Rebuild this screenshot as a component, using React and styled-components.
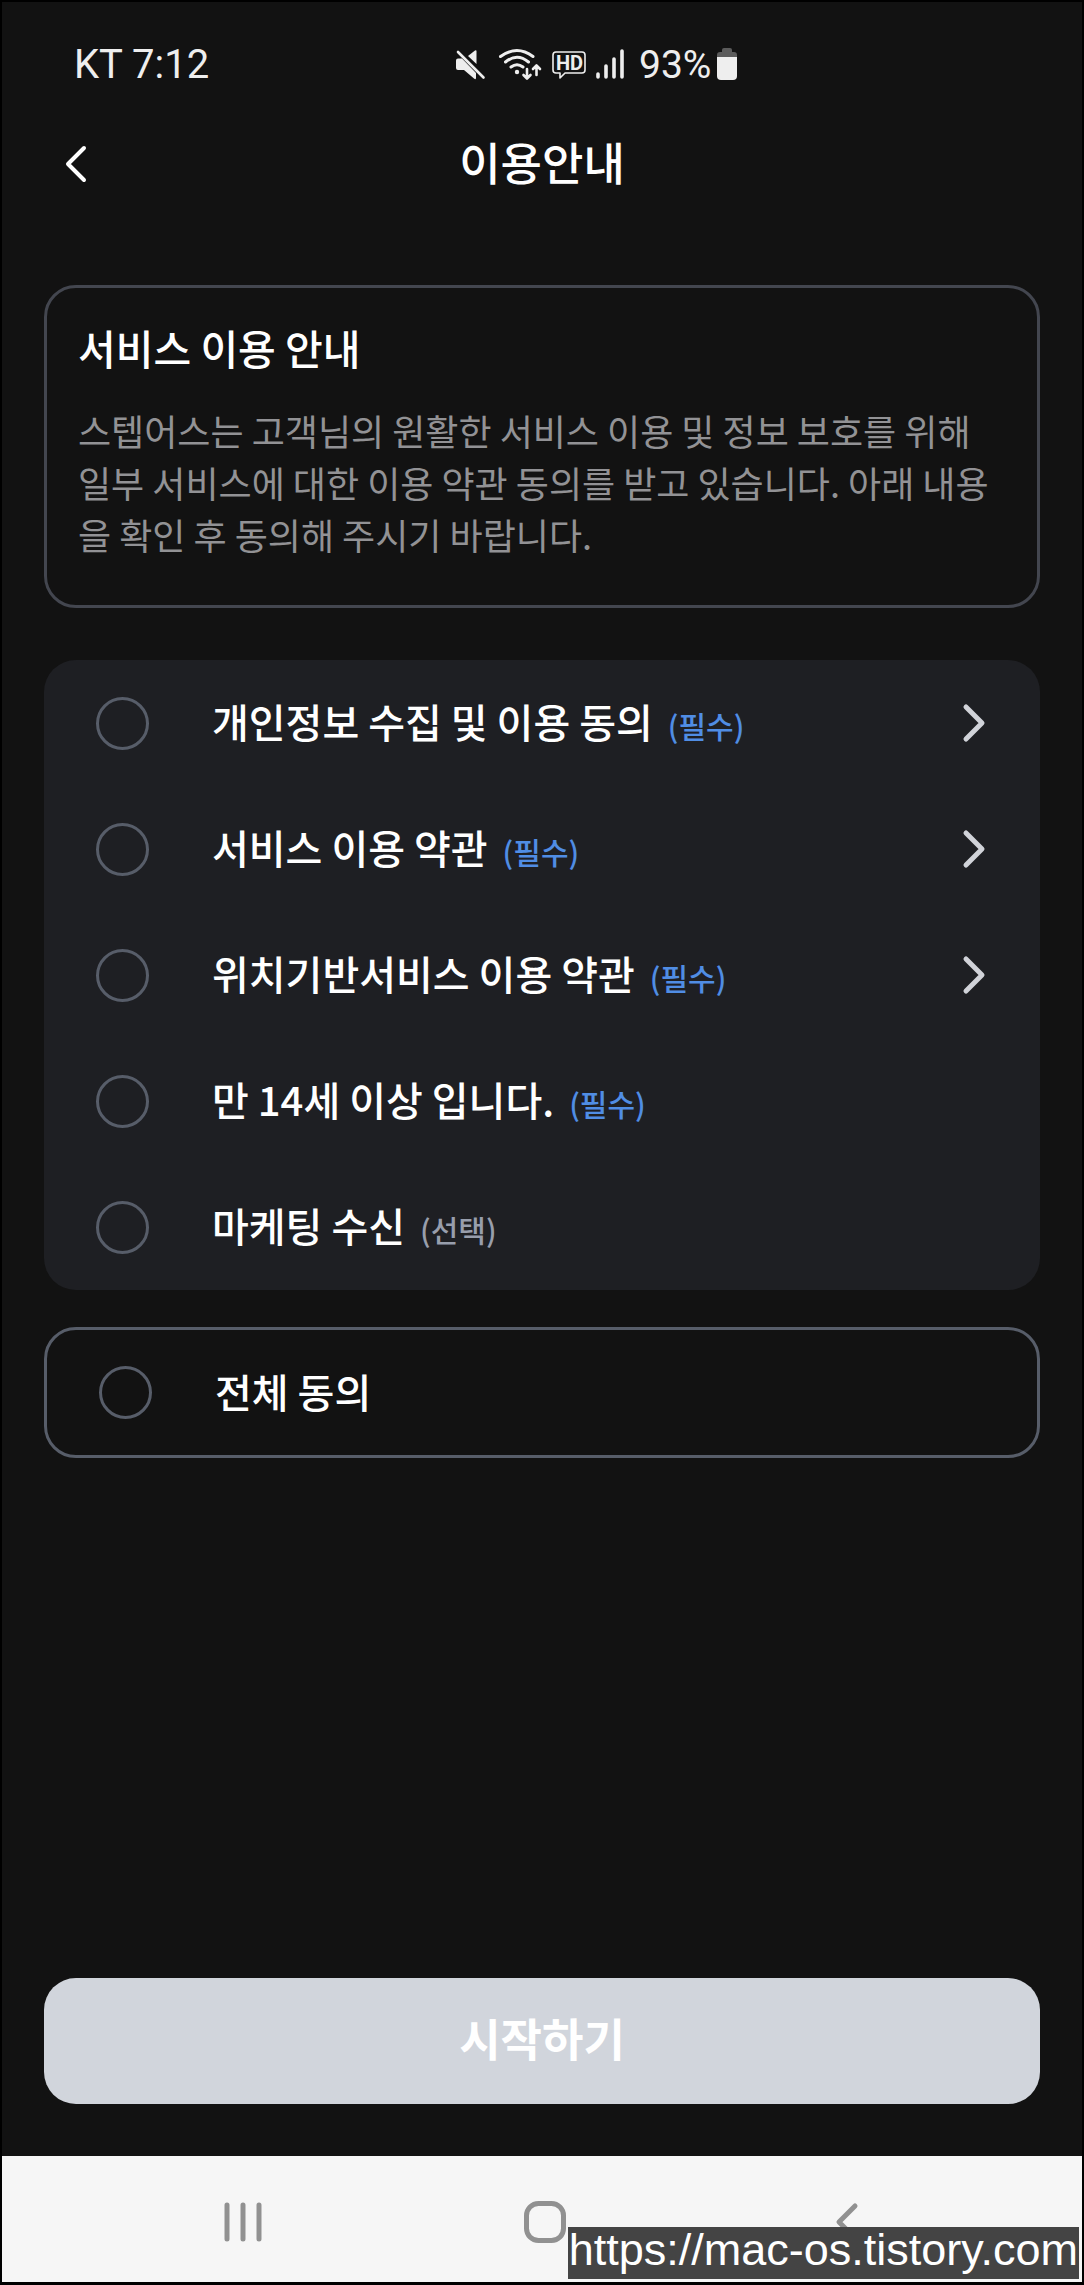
import React, { useState } from 'react'
import styled, { createGlobalStyle } from 'styled-components'

const GlobalStyle = createGlobalStyle`
  * {
    box-sizing: border-box;
  }
  body {
    margin: 0;
    background: #000;
  }
  button, input {
    font-family: inherit;
    margin: 0;
  }
`;

const Screen = styled.div`
  display: flex;
  flex-direction: column;
  min-height: 100vh;
  border: 2px solid #000;
  border-bottom-width: 3px;
  background: #121212;
  color: #fff;
  font-family: 'Noto Sans CJK KR', 'Noto Sans', sans-serif;
`;

const StatusBar = styled.div`
  display: grid;
  grid-template-columns: 380px 1fr;
  align-items: center;
  height: 124px;
  padding-left: 72px;
  color: #eee;
  font-family: Roboto, sans-serif;
  font-size: 40px;
  line-height: 48px;
`;

const StatusText = styled.span`
  padding-top: 2px;
`;

const StatusIcons = styled.div`
  display: flex;
  align-items: center;
  gap: 5px;
  font-size: 39px;
  svg {
    display: block;
  }
`;

const Header = styled.header`
  display: grid;
  grid-template-columns: 76px 1fr 76px;
  align-items: center;
  height: 76px;
  padding: 0 36px;
  h1 {
    margin: 0;
    padding-bottom: 4px;
    font-size: 45px;
    font-weight: 500;
    line-height: 64px;
    text-align: center;
  }
`;

const IconButton = styled.button`
  display: flex;
  justify-content: center;
  align-items: center;
  width: 76px;
  height: 76px;
  padding: 0;
  border: 0;
  background: none;
  color: ${props => props.$color || '#fff'};
  cursor: pointer;
`;

const Main = styled.main`
  display: flex;
  flex-direction: column;
  flex: 1;
  padding: 83px 42px 52px;
`;

const Notice = styled.section`
  margin-bottom: 52px;
  padding: 29px 31px 45px;
  border: 3px solid #43464f;
  border-radius: 32px;
  h2 {
    margin: 0 0 27px;
    font-size: 41px;
    font-weight: 500;
    line-height: 60px;
  }
  p {
    margin: 0;
    color: #929295;
    font-size: 36px;
    line-height: 52px;
    word-break: break-all;
  }
`;

const TermList = styled.ul`
  margin: 0 0 37px;
  padding: 0;
  border-radius: 32px;
  background: #1e1f23;
  list-style: none;
`;

const TermRow = styled.li`
  display: flex;
  align-items: center;
  justify-content: space-between;
  height: 126px;
  padding: 0 28px 0 52px;
`;

const TermLabel = styled.label`
  display: flex;
  align-items: center;
  flex: 1;
  gap: 63px;
  font-size: 40px;
  font-weight: 500;
  line-height: 60px;
  cursor: pointer;
`;

const TermText = styled.span`
  padding-bottom: 4px;
`;

const Check = styled.input`
  appearance: none;
  flex: none;
  width: 53px;
  height: 53px;
  border: 3px solid #575d69;
  border-radius: 50%;
  cursor: pointer;
  &:checked {
    border-color: #508de4;
    background: #508de4;
  }
`;

const Tag = styled.span`
  margin-left: 15px;
  color: ${props => props.$required ? '#508de4' : '#989eac'};
  font-size: 30px;
  font-weight: 500;
  line-height: 30px;
`;

const AgreeAll = styled.div`
  display: flex;
  height: 131px;
  margin-bottom: 52px;
  padding: 0 52px;
  border: 3px solid #575d69;
  border-radius: 32px;
`;

const StartButton = styled.button`
  height: 126px;
  margin-top: auto;
  padding: 0 0 6px;
  border: 0;
  border-radius: 32px;
  background: #d1d5dc;
  color: #fff;
  font-size: 45px;
  font-weight: 700;
  line-height: 64px;
`;

const NavBar = styled.nav`
  position: relative;
  display: grid;
  grid-template-columns: repeat(3, 1fr);
  justify-items: center;
  align-items: center;
  height: 126px;
  padding: 6px 84px 0 90px;
  background: #f6f6f6;
`;

const SourceLink = styled.a`
  position: absolute;
  right: 3px;
  bottom: 3px;
  height: 52px;
  padding: 0 1px;
  background: #444;
  color: #fff;
  font-family: 'Liberation Sans', Arial, sans-serif;
  font-size: 45px;
  line-height: 46px;
  text-decoration: none;
`;

const terms = [
  { id: 'privacy', title: '개인정보 수집 및 이용 동의', required: true, detail: true },
  { id: 'service', title: '서비스 이용 약관', required: true, detail: true },
  { id: 'location', title: '위치기반서비스 이용 약관', required: true, detail: true },
  { id: 'age', title: '만 14세 이상 입니다.', required: true, detail: false },
  { id: 'marketing', title: '마케팅 수신', required: false, detail: false },
]

const Chevron = ({ left, width = 5 }) => (
  <svg width="24" height="40" viewBox="0 0 24 40" fill="none" stroke="currentColor" strokeWidth={width} strokeLinecap="round" strokeLinejoin="round">
    <path d={left ? 'M20 4L4 20L20 36' : 'M4 4L20 20L4 36'} />
  </svg>
)

const PhoneIcons = () => (
  <svg width="180" height="36" viewBox="0 0 180 36" fill="none" stroke="#eee" strokeLinecap="round" strokeLinejoin="round">
    {/* muted speaker */}
    <path d="M4 12.500h4L22 27v5q0 2-2 .5L10 24H4q-2 0-2-2v-7.500q0-2 2-2z" fill="#eee" stroke="none" />
    <path d="M14 10L21 4.500q1.500-1 1.500 1V18z" fill="#eee" stroke="none" />
    <path d="M4 6L29.500 31.500" strokeWidth="2.600" />
    {/* wifi with traffic arrows */}
    <path d="M46.500 10.500Q63 -1.500 79 10.500M51.500 16Q63 6.500 74.500 16M57 21Q63 16.500 69 21" strokeWidth="3" />
    <circle cx="63" cy="26" r="2.200" fill="#eee" stroke="none" />
    <path d="M73 23v9M69.500 29l3.500 3.500l3.500-3.500M82.500 29v-9M79 23l3.500-3.500l3.500 3.500" strokeWidth="2.600" />
    {/* HD voice */}
    <path d="M102 6h26q3 0 3 3v15q0 3-3 3h-17l-5 5v-5h-4q-3 0-3-3V9q0-3 3-3z" strokeWidth="1.600" />
    <text x="102" y="24" fill="#eee" stroke="none" fontFamily="Roboto, sans-serif" fontSize="20" fontWeight="700">HD</text>
    {/* signal */}
    <path d="M144 28v3M152 20v11M160 13v18M168 5v26" strokeWidth="3.600" />
  </svg>
)

const Battery = () => (
  <svg width="22" height="34" viewBox="0 0 22 34">
    <path d="M6 3q0-2 2-2h6q2 0 2 2v2h2q3 0 3 3v3H1V8q0-3 3-3h2z" fill="#5b5b5b" />
    <path d="M1 10h20v19q0 4-4 4H5q-4 0-4-4z" fill="#eee" />
  </svg>
)

const App = () => {
  const [agreed, setAgreed] = useState([])

  const toggle = (id) => {
    setAgreed(agreed.includes(id) ? agreed.filter(ele => ele !== id) : [...agreed, id])
  }
  const allAgreed = agreed.length === terms.length
  const canStart = terms.every(ele => !ele.required || agreed.includes(ele.id))

  return (
    <Screen>
      <GlobalStyle />
      <StatusBar>
        <StatusText>KT 7:12</StatusText>
        <StatusIcons>
          <PhoneIcons />
          <StatusText>93%</StatusText>
          <Battery />
        </StatusIcons>
      </StatusBar>
      <Header>
        <IconButton type="button" aria-label="뒤로">
          <Chevron left width={4} />
        </IconButton>
        <h1>이용안내</h1>
      </Header>
      <Main>
        <Notice>
          <h2>서비스 이용 안내</h2>
          <p>스텝어스는 고객님의 원활한 서비스 이용 및 정보 보호를 위해 일부 서비스에 대한 이용 약관 동의를 받고 있습니다. 아래 내용을 확인 후 동의해 주시기 바랍니다.</p>
        </Notice>
        <TermList>
          {terms.map(ele =>
            <TermRow key={ele.id}>
              <TermLabel>
                <Check type="checkbox" checked={agreed.includes(ele.id)} onChange={() => toggle(ele.id)} />
                <TermText>
                  {ele.title}
                  <Tag $required={ele.required}>{ele.required ? '(필수)' : '(선택)'}</Tag>
                </TermText>
              </TermLabel>
              {ele.detail &&
                <IconButton type="button" $color="#d1d3d9" aria-label={`${ele.title} 보기`}>
                  <Chevron />
                </IconButton>
              }
            </TermRow>
          )}
        </TermList>
        <AgreeAll>
          <TermLabel>
            <Check type="checkbox" checked={allAgreed} onChange={() => setAgreed(allAgreed ? [] : terms.map(ele => ele.id))} />
            <TermText>전체 동의</TermText>
          </TermLabel>
        </AgreeAll>
        <StartButton type="button" disabled={!canStart}>시작하기</StartButton>
      </Main>
      <NavBar>
        <IconButton type="button" $color="#919191" aria-label="최근 앱">
          <svg width="40" height="42" viewBox="0 0 40 42" stroke="currentColor" strokeWidth="5" strokeLinecap="round">
            <path d="M4 4v34M20 4v34M36 4v34" />
          </svg>
        </IconButton>
        <IconButton type="button" $color="#919191" aria-label="홈">
          <svg width="42" height="42" viewBox="0 0 42 42" fill="none" stroke="currentColor" strokeWidth="5">
            <rect x="2.500" y="2.500" width="37" height="37" rx="12" />
          </svg>
        </IconButton>
        <IconButton type="button" $color="#919191" aria-label="이전">
          <Chevron left />
        </IconButton>
        <SourceLink href="https://mac-os.tistory.com">https://mac-os.tistory.com</SourceLink>
      </NavBar>
    </Screen>
  )
}

export default App
